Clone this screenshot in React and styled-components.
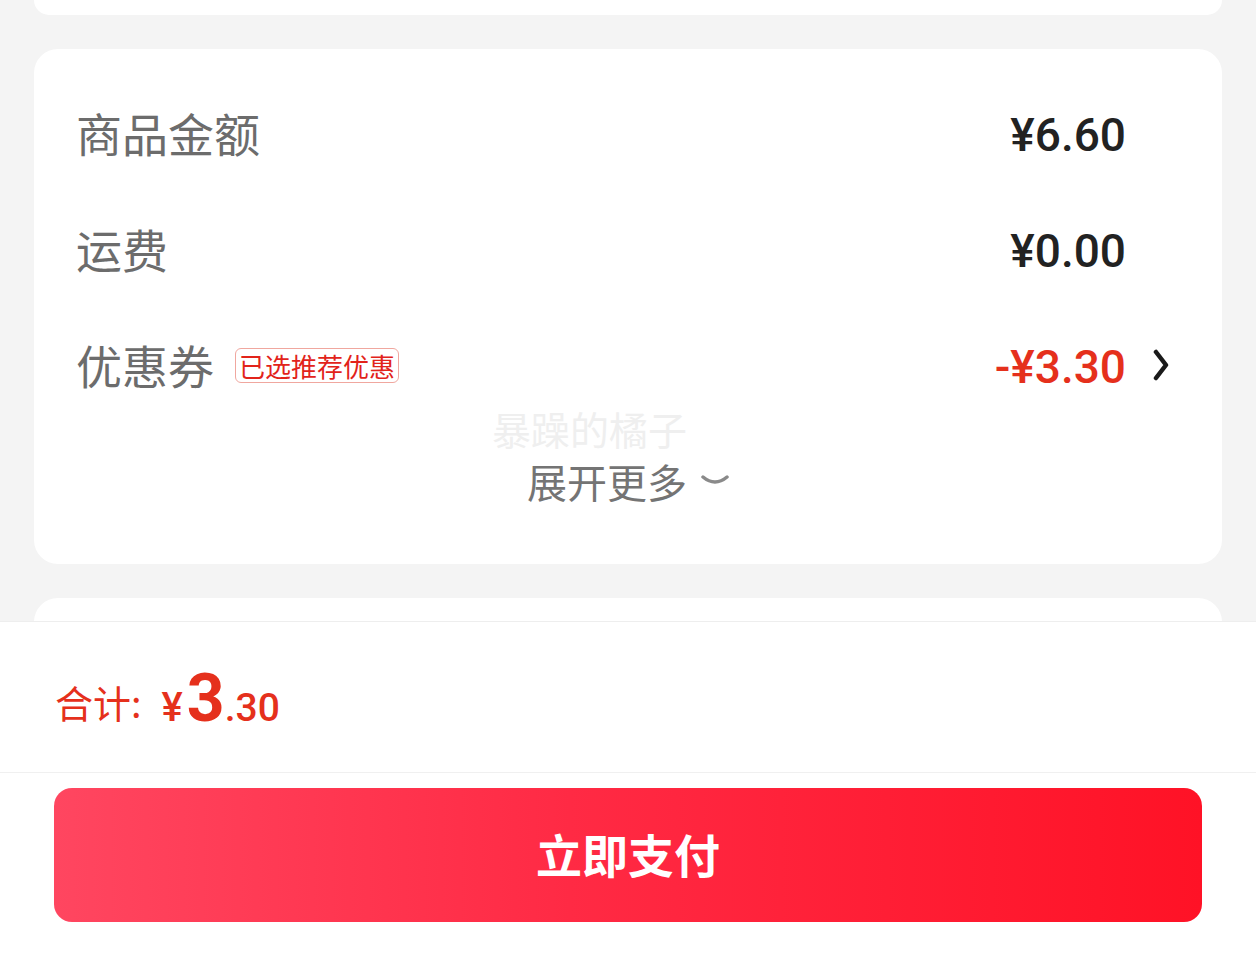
import React from "react";
import styled, { createGlobalStyle } from "styled-components";

const GlobalStyle = createGlobalStyle`
  html, body {
    margin: 0;
    padding: 0;
    background: #f4f4f4;
  }
  body {
    font-family: "Noto Sans CJK SC", "Noto Sans", sans-serif;
  }
`;

const Page = styled.div`
  height: 964px;
  display: flex;
  flex-direction: column;
  overflow: hidden;
`;

const Content = styled.div`
  flex: 1;
  overflow: hidden;
  display: flex;
  flex-direction: column;
  gap: 34px;
  padding: 0 34px;
`;

const Card = styled.div`
  background: #fff;
  border-radius: ${(p) => (p.cut === "top" ? "0 0 24px 24px" : "24px")};
  flex-shrink: 0;
  height: ${(p) => (p.h ? `${p.h}px` : "auto")};
`;

const FeeCard = styled(Card)`
  position: relative;
  padding: 25px 0 64px;
`;

const Row = styled.div`
  height: 116px;
  display: flex;
  align-items: center;
  justify-content: space-between;
  padding: 0 52px 0 42px;
`;

const Left = styled.div`
  display: flex;
  align-items: center;
  gap: 21px;
`;

const Label = styled.span`
  font-size: 46px;
  color: #6c6c6c;
  line-height: 1;
`;

const Tag = styled.span`
  font-size: 26px;
  line-height: 33px;
  color: #e2231a;
  border: 1px solid #f0a79f;
  border-radius: 6px;
  padding: 0 3px;
  margin-top: 2px;
`;

const Right = styled.div`
  display: flex;
  align-items: center;
  gap: 26px;
`;

const Price = styled.span`
  font-family: Roboto, "Liberation Sans", sans-serif;
  font-weight: 500;
  font-size: 46px;
  line-height: 1;
  color: ${(p) => (p.red ? "#e5301c" : "#222")};
  margin-right: ${(p) => (p.arrow ? "0" : "44px")};
  margin-top: ${(p) => (p.arrow ? "6px" : "5px")};
`;

const More = styled.div`
  display: flex;
  align-items: center;
  justify-content: center;
  gap: 14px;
  margin-top: 40px;
  font-size: 40px;
  line-height: 38px;
  color: #747474;
`;

const Watermark = styled.div`
  position: absolute;
  left: 458px;
  top: 361px;
  font-size: 39px;
  line-height: 36px;
  color: #efefef;
  pointer-events: none;
`;

const Bottom = styled.div`
  background: #fff;
  border-top: 1px solid #eeeeee;
  height: 342px;
  flex-shrink: 0;
  display: flex;
  flex-direction: column;
`;

const TotalRow = styled.div`
  height: 150px;
  border-bottom: 1px solid #f0f0f0;
  display: flex;
  align-items: center;
  padding: 0 55px;
  color: #e5301c;
`;

const TotalLabel = styled.span`
  font-size: 38px;
  margin-right: 20px;
  margin-top: 8px;
`;

const Amount = styled.span`
  font-family: Roboto, "Liberation Sans", sans-serif;
  font-weight: 500;
  display: flex;
  align-items: baseline;
  margin-top: 2px;
`;

const Part = styled.span`
  font-size: ${(p) => p.size}px;
  font-weight: ${(p) => p.weight || 500};
  margin-right: ${(p) => p.gap || 0}px;
`;

const PayButton = styled.button`
  margin: 15px 54px 0;
  height: 134px;
  border: none;
  border-radius: 18px;
  background: linear-gradient(90deg, #ff4660 0%, #ff2a44 45%, #ff1226 100%);
  color: #fff;
  font-family: "Noto Sans CJK SC", sans-serif;
  font-weight: 700;
  font-size: 46px;
  display: flex;
  align-items: center;
  justify-content: center;
  padding-bottom: 6px;
`;

const ChevronRight = () => (
  <svg width="18" height="34" viewBox="0 0 18 34">
    <polyline
      points="4,5 14,18 4,31"
      fill="none"
      stroke="#1a1a1a"
      strokeWidth="4.5"
      strokeLinecap="round"
      strokeLinejoin="round"
    />
  </svg>
);

const ChevronDown = () => (
  <svg width="28" height="14" viewBox="0 0 28 14">
    <path
      d="M2 3 Q14 13 26 3"
      fill="none"
      stroke="#8a8a8a"
      strokeWidth="3.5"
      strokeLinecap="round"
    />
  </svg>
);

const fees = [
  { label: "商品金额", value: "¥6.60" },
  { label: "运费", value: "¥0.00" },
];

export default function App() {
  return (
    <>
      <GlobalStyle />
      <Page>
        <Content>
          <Card cut="top" h={15} />
          <FeeCard>
            {fees.map((f) => (
              <Row key={f.label}>
                <Label>{f.label}</Label>
                <Price>{f.value}</Price>
              </Row>
            ))}
            <Row>
              <Left>
                <Label>优惠券</Label>
                <Tag>已选推荐优惠</Tag>
              </Left>
              <Right>
                <Price red arrow>
                  -¥3.30
                </Price>
                <ChevronRight />
              </Right>
            </Row>
            <More>
              展开更多
              <ChevronDown />
            </More>
            <Watermark>暴躁的橘子</Watermark>
          </FeeCard>
          <Card h={120} />
        </Content>
        <Bottom>
          <TotalRow>
            <TotalLabel>合计:</TotalLabel>
            <Amount>
              <Part size={40} gap={4}>
                ¥
              </Part>
              <Part size={66} weight={700}>
                3
              </Part>
              <Part size={39}>.30</Part>
            </Amount>
          </TotalRow>
          <PayButton>立即支付</PayButton>
        </Bottom>
      </Page>
    </>
  );
}
